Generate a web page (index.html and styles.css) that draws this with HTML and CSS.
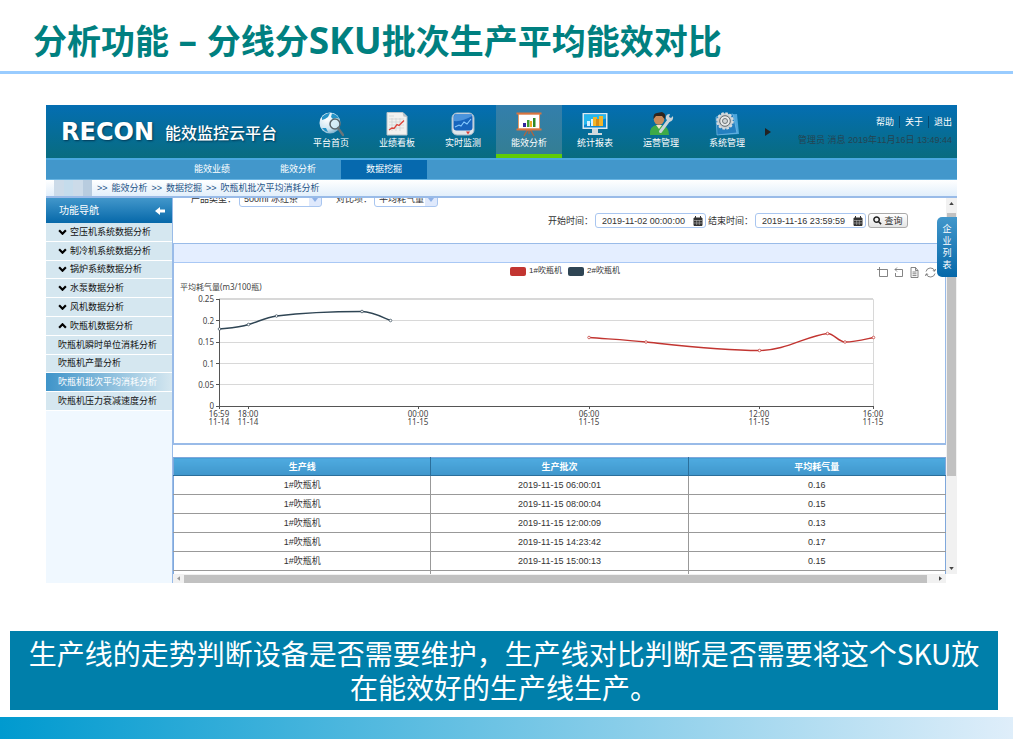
FILE: index.html
```html
<!DOCTYPE html>
<html lang="zh-CN">
<head>
<meta charset="utf-8">
<title>分析功能 – 分线分SKU批次生产平均能效对比</title>
<link rel="stylesheet" href="styles.css">
</head>
<body>
<header class="slide-title"><h1>分析功能<span> – </span>分线分<span>SKU</span>批次生产平均能效对比</h1></header>

<main class="app">
  <header class="topbar">
    <div class="brand"><span class="brand-mark">RECON</span><span class="brand-name">能效监控云平台</span></div>
    <nav class="modules">
      <a href="#" class="module">
        <svg viewBox="0 0 26 26"><defs><radialGradient id="gl" cx=".35" cy=".3" r=".8"><stop offset="0" stop-color="#fff"/><stop offset=".6" stop-color="#cfe6f2"/><stop offset="1" stop-color="#6aa5c4"/></radialGradient></defs><circle cx="12" cy="12" r="10.5" fill="url(#gl)"/><path d="M4 6q4-4 8-4l-2 4-3 2-3 1zM14 2.500q5 1 7 5l-3-.5-3 1-2-2zM4 17l4 0 2 4q-4-1-6-4z" fill="#2493c7"/><circle cx="17" cy="13" r="5" fill="#d6edf7" fill-opacity=".8" stroke="#59656b" stroke-width="1.5"/><path d="M20 17l5 7" stroke="#69757a" stroke-width="2.4" stroke-linecap="round"/></svg>
        <span>平台首页</span></a>
      <a href="#" class="module">
        <svg viewBox="0 0 26 26"><path d="M3 1.500h16l4 4V24H3z" fill="#f1f1ef" stroke="#b9c4ca"/><path d="M18.500 1.500l1 4 4 .5z" fill="#b7c0c5"/><path d="M5 5h5M5 8h15M5 11h15M5 14h15M5 17h15M8 7v13M12 7v13M16 7v13" stroke="#cbd0d2" stroke-width=".7"/><path d="M5 19l3-2 2 .5 3-4 2 1 5-5" fill="none" stroke="#dc4037" stroke-width="1.300"/></svg>
        <span>业绩看板</span></a>
      <a href="#" class="module">
        <svg viewBox="0 0 26 26"><rect x="2" y="2" width="22" height="22" rx="5" fill="#dfe5ea" stroke="#a3b9c9"/><rect x="3.500" y="3" width="19" height="16.500" rx="3" fill="#1765bd"/><path d="M4 10q8 1 18-5v-1q0-1-2-1H6Q4 3 4 6z" fill="#4b94dc"/><path d="M5 16l4-2 2 1 3-4 3 2 4-5" fill="none" stroke="#87cbff" stroke-width="1.100"/><path d="M16 20.500h4l-2 3z" fill="#dc3c36"/></svg>
        <span>实时监测</span></a>
      <a href="#" class="module active">
        <svg viewBox="0 0 26 26"><path d="M12 18l-4 7M14 18l4 7M13 18v5" stroke="#b5633a" stroke-width="1.300"/><path d="M2.500 3h21v15h-21z" fill="#fff" stroke="#e29a68"/><path d="M.5 2.500h25M.5 18.500h25" stroke="#d87540" stroke-width="2.200"/><path d="M7 12h3v4H7z" fill="#30269b"/><path d="M11 9h2.500v7H11z" fill="#3f9c32"/><path d="M14 10h2v6h-2z" fill="#eeae23"/><path d="M17 7h2.500v9H17z" fill="#2d8828"/></svg>
        <span>能效分析</span></a>
      <a href="#" class="module">
        <svg viewBox="0 0 26 26"><path d="M.5 2h25v16H.5z" fill="#dbeaf0"/><path d="M2 3.500h22v13H2z" fill="#0c87d2"/><path d="M2 3.500h22v4L2 14z" fill="#26b7ed"/><path d="M5 10h3v5H5zM9 8h3v7H9z" fill="#d8f2ff"/><path d="M11 6h4v9h-4zM17 5h4v10h-4z" fill="#f3b52a"/><path d="M14 8h3v7h-3z" fill="#d78c15"/><path d="M10 18h6v4h4v2H6v-2h4z" fill="#cfd9dd"/></svg>
        <span>统计报表</span></a>
      <a href="#" class="module">
        <svg viewBox="0 0 26 26"><path d="M2 24q-1-9 7-10h4q8 1 8 10z" fill="#3eaa48"/><path d="M8 14h6l-3 4z" fill="#f3e3cd"/><circle cx="11" cy="8.500" r="5.200" fill="#c78a5b"/><path d="M5.500 8Q5 2 9 2l5-1q5 2 2.500 7L14 5H8z" fill="#2f251e"/><path d="M12.500 20.500L21 9" stroke="#c9d3d8" stroke-width="3" stroke-linecap="round"/><path d="M18 8q-1-5 4-5l-1 3 2 1 2-2q1 5-4 6z" fill="#c9d3d8"/></svg>
        <span>运营管理</span></a>
      <a href="#" class="module">
        <svg viewBox="0 0 26 26"><path d="M5 4l18-1 2 20-20 1z" fill="#4da6dc"/><path d="M2 6l17-3 4 19-20 2z" fill="#247fc0" stroke="#75bde7" stroke-width=".7"/><circle cx="11" cy="10" r="7.800" fill="#c9d0d3" stroke="#d7dcde" stroke-width="2" stroke-dasharray="2.500 1.600"/><circle cx="11" cy="10" r="5.300" fill="#e7e9e9" stroke="#5f676b"/><circle cx="11" cy="10" r="2.500" fill="#d0d5d6" stroke="#6f777a"/></svg>
        <span>系统管理</span></a>
    </nav>
    <button class="more" aria-label="更多"><svg viewBox="0 0 6 8"><path d="M0 0l6 4-6 4z"/></svg></button>
    <div class="account">
      <div class="account-links"><a href="#">帮助</a><a href="#">关于</a><a href="#">退出</a></div>
      <div class="account-info">管理员 消息 2019年11月16日 13:49:44</div>
    </div>
  </header>

  <nav class="subnav"><a href="#">能效业绩</a><a href="#">能效分析</a><a href="#" class="active">数据挖掘</a></nav>
  <div class="crumbs"><span class="masked"><i></i><i></i><i></i><i></i></span><span>&gt;&gt;</span><a href="#">能效分析</a><span>&gt;&gt;</span><a href="#">数据挖掘</a><span>&gt;&gt;</span><a href="#">吹瓶机批次平均消耗分析</a></div>

  <div class="workspace">
    <aside class="sidebar">
      <div class="side-head"><span>功能导航</span><button aria-label="收起"><svg viewBox="0 0 10 8"><path d="M5 0v2.500h5v3H5V8L0 4z"/></svg></button></div>
      <nav class="side-list">
        <a href="#"><svg viewBox="0 0 8 5"><path d="M1 1l3 3 3-3"/></svg>空压机系统数据分析</a>
        <a href="#"><svg viewBox="0 0 8 5"><path d="M1 1l3 3 3-3"/></svg>制冷机系统数据分析</a>
        <a href="#"><svg viewBox="0 0 8 5"><path d="M1 1l3 3 3-3"/></svg>锅炉系统数据分析</a>
        <a href="#"><svg viewBox="0 0 8 5"><path d="M1 1l3 3 3-3"/></svg>水泵数据分析</a>
        <a href="#"><svg viewBox="0 0 8 5"><path d="M1 1l3 3 3-3"/></svg>风机数据分析</a>
        <a href="#"><svg viewBox="0 0 8 5"><path d="M1 4l3-3 3 3"/></svg>吹瓶机数据分析</a>
        <a href="#">吹瓶机瞬时单位消耗分析</a>
        <a href="#">吹瓶机产量分析</a>
        <a href="#" class="active">吹瓶机批次平均消耗分析</a>
        <a href="#">吹瓶机压力衰减速度分析</a>
      </nav>
    </aside>

    <div class="viewport">
      <section class="content">
        <div class="filters-top">
          <label for="product">产品类型：</label><span class="select product"><select id="product"><option>500ml 冰红茶</option></select></span>
          <label for="metric">对比项：</label><span class="select metric"><select id="metric"><option>平均耗气量</option></select></span>
        </div>
        <form class="filters">
          <label for="start">开始时间：</label>
          <span class="date"><input id="start" type="text" value="2019-11-02 00:00:00"><svg viewBox="0 0 10 10"><path d="M1 2h8v7.500H1zM2.500 0v2M7.500 0v2" /><path class="lines" d="M1 4.500h8M1 7h8M3.700 4v5M6.300 4v5"/></svg></span>
          <label for="end">结束时间：</label>
          <span class="date"><input id="end" type="text" value="2019-11-16 23:59:59"><svg viewBox="0 0 10 10"><path d="M1 2h8v7.500H1zM2.500 0v2M7.500 0v2" /><path class="lines" d="M1 4.500h8M1 7h8M3.700 4v5M6.300 4v5"/></svg></span>
          <button type="button" class="search"><svg viewBox="0 0 10 10"><circle cx="4" cy="4" r="3"/><path d="M6.300 6.300L9 9"/></svg>查询</button>
        </form>

        <section class="panel">
          <div class="panel-head"></div>
          <div class="chart-head">
            <div class="legend"><button><i class="red"></i>1#吹瓶机</button><button><i class="navy"></i>2#吹瓶机</button></div>
            <div class="tools">
              <button aria-label="区域缩放"><svg viewBox="0 0 11 11"><path d="M2.500 0v9.500h8v-7H0"/></svg></button>
              <button aria-label="还原缩放"><svg viewBox="0 0 11 11"><path d="M4 .5l-2 2 2 2M2 2.500h7.500v7h-7V6"/></svg></button>
              <button aria-label="数据视图"><svg viewBox="0 0 11 11"><path d="M2 .5h4.500l2.500 3v7H2zM6.500 .5v3H9M3.500 5h4M3.500 6.800h4M3.500 8.600h4"/></svg></button>
              <button aria-label="刷新"><svg viewBox="0 0 11 11"><path d="M1 4.500a4.600 4.600 0 0 1 8.800-.5M10 6.500a4.600 4.600 0 0 1-8.800.5M10.500 2l-.7 2.200-2-.6M.5 9l.7-2.200 2 .6"/></svg></button>
            </div>
          </div>
          <svg class="chart" viewBox="174 279 771 164" role="img" aria-label="平均耗气量">
            <text x="180" y="290">平均耗气量(m3/100瓶)</text>
            <path class="grid" d="M219 299.500H873.500V406M219 320.500H873M219 342.500H873M219 363.500H873M219 384.500H873"/>
            <path class="grid" d="M219 298.500H873"/>
            <path class="axis" d="M219.500 299V409M216 299.500h4M216 320.500h4M216 342.500h4M216 363.500h4M216 384.500h4M216 406.500H874M248.500 406v3M418.500 406v3M589.500 406v3M759.500 406v3M873.500 406v3"/>
            <g class="ylab"><text x="214" y="302">0.25</text><text x="214" y="324">0.2</text><text x="214" y="345">0.15</text><text x="214" y="367">0.1</text><text x="214" y="388">0.05</text><text x="214" y="409">0</text></g>
            <g class="xlab"><text><tspan x="219" y="417">16:59</tspan><tspan x="219" y="425">11-14</tspan></text><text><tspan x="248" y="417">18:00</tspan><tspan x="248" y="425">11-14</tspan></text><text><tspan x="418" y="417">00:00</tspan><tspan x="418" y="425">11-15</tspan></text><text><tspan x="589" y="417">06:00</tspan><tspan x="589" y="425">11-15</tspan></text><text><tspan x="759" y="417">12:00</tspan><tspan x="759" y="425">11-15</tspan></text><text><tspan x="873" y="417">16:00</tspan><tspan x="873" y="425">11-15</tspan></text></g>
            <g class="s-navy"><path d="M219.500 329C229 328 239 327.500 248.500 324.500C258 322 265 317.500 276.500 316C305 312.500 335 311.500 362 311.500C372 311.500 382 317 390.500 320.500"/><circle cx="219.500" cy="329" r="1.300"/><circle cx="248.500" cy="324.500" r="1.300"/><circle cx="276.500" cy="316" r="1.300"/><circle cx="362" cy="311.500" r="1.300"/><circle cx="390.500" cy="320.500" r="1.300"/></g>
            <g class="s-red"><path d="M589 337.500C608 339 627 340 646 342C684 346 722 350.500 759.500 350.500C786 350.500 806 336 827.500 333.500C834 333.500 838 341.500 845 342C855 342 864 339.500 873.500 337.500"/><circle cx="589" cy="337.500" r="1.300"/><circle cx="646" cy="342" r="1.300"/><circle cx="759.500" cy="350.500" r="1.300"/><circle cx="827.500" cy="333.500" r="1.300"/><circle cx="845" cy="342" r="1.300"/><circle cx="873.500" cy="337.500" r="1.300"/></g>
          </svg>
        </section>

        <table class="grid-table">
          <thead><tr><th>生产线</th><th>生产批次</th><th>平均耗气量</th></tr></thead>
          <tbody>
            <tr><td>1#吹瓶机</td><td>2019-11-15 06:00:01</td><td>0.16</td></tr>
            <tr><td>1#吹瓶机</td><td>2019-11-15 08:00:04</td><td>0.15</td></tr>
            <tr><td>1#吹瓶机</td><td>2019-11-15 12:00:09</td><td>0.13</td></tr>
            <tr><td>1#吹瓶机</td><td>2019-11-15 14:23:42</td><td>0.17</td></tr>
            <tr><td>1#吹瓶机</td><td>2019-11-15 15:00:13</td><td>0.15</td></tr>
            <tr><td></td><td></td><td></td></tr>
          </tbody>
        </table>
      </section>
      <div class="vbar"><svg viewBox="0 0 6 4"><path d="M0 4l3-4 3 4z"/></svg><div class="vthumb"></div><svg viewBox="0 0 6 4"><path d="M0 0l3 4 3-4z"/></svg></div>
      <div class="hbar"><svg class="dim" viewBox="0 0 4 6"><path d="M4 0L0 3l4 3z"/></svg><div class="hthumb"></div><svg viewBox="0 0 4 6"><path d="M0 0l4 3-4 3z"/></svg></div>
      <button class="company-tab">企业列表</button>
    </div>
  </div>
</main>

<p class="caption">生产线的走势判断设备是否需要维护，生产线对比判断是否需要将这个SKU放在能效好的生产线生产。</p>
<footer class="slide-foot"></footer>
</body>
</html>
```

FILE: styles.css
```css
* { box-sizing: border-box; }
body { margin: 0; background: #fff; color: #333; font: 9px/12px "Liberation Sans", "Noto Sans CJK SC", sans-serif; }
a { color: inherit; text-decoration: none; }
button, input, select { font: inherit; color: inherit; margin: 0; padding: 0; border: 0; background: none; }
svg { display: block; }

.slide-title { height: 74px; padding: 15px 33px 0; border-bottom: 3px solid #99ccff; }
.slide-title h1 { margin: 0; font: bold 34px/50px "Noto Sans CJK SC", sans-serif; color: #008080; white-space: nowrap; }
.slide-title span { font-family: "Open Sans", sans-serif; font-size: 37px; }

.app { margin: 31px 56px 0 46px; }

.topbar { display: flex; height: 53px; background: linear-gradient(#046eb2, #086c80); color: #fff; }
.brand { display: flex; align-items: center; width: 252px; padding-left: 15px; text-shadow: 1px 1px 2px #033a57; white-space: nowrap; }
.brand-mark { width: 104px; font: bold 24px/30px "DejaVu Sans", sans-serif; }
.brand-name { font: 500 16px/24px "Noto Sans CJK SC", sans-serif; }
.modules { display: flex; }
.module { display: flex; flex-direction: column; align-items: center; width: 66px; padding-top: 6px; border-bottom: 4px solid transparent; }
.module svg { width: 26px; height: 26px; }
.module.active { background: linear-gradient(#337fac, #347e94); border-color: #5fcb08; }
.more { width: 16px; padding: 0 5px; }
.more svg { width: 6px; height: 8px; fill: #222; }
.account { margin-left: auto; padding: 11px 5px 0 0; text-align: right; white-space: nowrap; }
.account-links { display: flex; justify-content: flex-end; }
.account-links a + a { margin-left: 5px; padding-left: 5px; border-left: 1px solid #06496f; }
.account-info { margin-top: 6px; color: #244452; }

.subnav { display: flex; height: 22px; padding-left: 123px; background: #4297cb; border-top: 2px solid #4aa8e0; border-bottom: 1px solid #68b5e3; color: #fff; line-height: 19px; }
.subnav a { width: 86px; text-align: center; }
.subnav .active { background: #0669ae; }

.crumbs { display: flex; align-items: center; gap: 4px; height: 18px; padding-left: 8px; border-bottom: 2px solid #99bbe8; background: linear-gradient(#fff, #e2effb); color: #1f5486; }
.masked { display: flex; width: 38px; height: 16px; margin-right: 1px; }
.masked i { flex: 1; background: #ccdbe9; }
.masked i:nth-child(even) { background: #c5dcec; }
.masked i:last-child { background: #b8ccdf; }

.workspace { display: flex; }
.sidebar { width: 126px; background: #f0f8ff; }
.side-head { display: flex; justify-content: space-between; align-items: center; height: 25px; padding: 0 7px 0 13px; background: linear-gradient(#4297cb, #0668a9); color: #fff; font-size: 10px; }
.side-head svg { width: 10px; height: 8px; fill: #fff; }
.side-list { display: grid; grid-auto-rows: 1fr; height: 188px; }
.side-list a { display: flex; align-items: center; gap: 3px; padding-left: 12px; border-bottom: 1px solid #fff; background: #d5e7f0; color: #111; white-space: nowrap; }
.side-list svg { width: 9px; height: 6px; fill: none; stroke: #000; stroke-width: 2; }
.side-list .active { background: linear-gradient(90deg, #3f94c9, #d5e7f0); color: #fff; }

.viewport { position: relative; flex: 1; display: grid; grid-template: 376px 9px / 1fr 11px; min-width: 0; border-left: 1px solid #99bbe8; }
.content { overflow: hidden; background: #fff; }
.filters-top { display: flex; align-items: flex-end; height: 9px; padding-left: 18px; overflow: hidden; }
.filters-top label { height: 14px; }
.select { display: flex; height: 16px; border: 1px solid #a9c6f0; border-radius: 3px; background: linear-gradient(270deg, #dfe9fc 12px, #fff 12px); position: relative; }
.select::after { content: ""; position: absolute; right: 3px; top: 6px; border: 3px solid transparent; border-top: 4px solid #8db0e6; }
.select select { width: 100%; padding-left: 4px; appearance: none; line-height: 12px; }
.product { width: 83px; margin: 0 14px 0 3px; }
.metric { width: 64px; margin-left: 2px; }
.filters { display: flex; justify-content: flex-end; align-items: center; gap: 2px; padding: 6px 38px 15px 0; }
.date { display: flex; align-items: center; width: 111px; height: 15px; padding: 0 2px 0 6px; border: 1px solid #a9c6f0; border-radius: 3px; }
.date input { flex: 1; width: 0; height: 13px; }
.date svg { width: 10px; height: 10px; fill: #333; stroke: #333; }
.date .lines { stroke: #bbb; stroke-width: .6; }
.search { display: flex; align-items: center; justify-content: center; gap: 2px; width: 40px; height: 15px; border: 1px solid #aaa; border-radius: 3px; background: linear-gradient(#fff, #e4e4e4); }
.search svg { width: 9px; height: 9px; fill: none; stroke: #222; stroke-width: 1.7px; }

.panel { border: 1px solid #99bbe8; border-bottom-width: 2px; }
.panel-head { height: 19px; background: #e4eeff; border-bottom: 1px solid #a9c8f5; }
.chart-head { display: grid; grid-template-columns: 1fr auto 1fr; align-items: center; height: 16px; padding: 0 9px 0 20px; }
.legend { grid-column: 2; display: flex; gap: 6px; font-size: 8px; }
.legend button { display: flex; align-items: center; gap: 3px; }
.legend i { width: 16px; height: 9px; border-radius: 2px; }
.red { background: #c23531; }
.navy { background: #2f4554; }
.tools { display: flex; justify-content: flex-end; gap: 5px; padding-top: 3px; }
.tools svg { width: 11px; height: 11px; fill: none; stroke: #777; stroke-width: .9; }
.chart { width: 100%; font: 8px "Noto Sans", "Noto Sans CJK SC", sans-serif; fill: #444; }
.grid { fill: none; stroke: #d8d8d8; }
.axis { fill: none; stroke: #555; }
.ylab { text-anchor: end; }
.xlab { text-anchor: middle; }
.s-navy path { fill: none; stroke: #2f4554; stroke-width: 1.4; }
.s-navy circle { fill: #fff; stroke: #2f4554; stroke-width: .7; }
.s-red path { fill: none; stroke: #c23531; stroke-width: 1.4; }
.s-red circle { fill: #fff; stroke: #c23531; stroke-width: .7; }

.grid-table { width: 100%; margin-top: 12px; border-collapse: collapse; table-layout: fixed; text-align: center; border: 1px solid #7fa8dc; }
.grid-table tr { height: 19px; }
.grid-table thead tr { height: 18px; }
.grid-table th { padding: 0; background: linear-gradient(#4fabe0, #3f96cb); border-right: 1px solid #2b6f9b; border-bottom: 1px solid #2b6f9b; color: #fff; }
.grid-table td { padding: 0; border-right: 1px solid #999; border-bottom: 1px solid #999; }
.grid-table tr > :last-child { border-right-color: #7fa8dc; }

.vbar { display: flex; flex-direction: column; align-items: center; padding: 4px 0; background: #f1f1f1; }
.vbar svg { width: 5px; height: 3px; fill: #444; }
.vthumb { width: 9px; height: 263px; margin: 8px 0 auto; background: #c1c1c1; }
.hbar { display: flex; align-items: center; gap: 4px; padding: 0 4px; background: #f1f1f1; }
.hbar svg { width: 3px; height: 5px; fill: #444; }
.hbar .dim { fill: #999; }
.hthumb { flex: 1; height: 8px; margin-right: 8px; background: #c1c1c1; }
.company-tab { position: absolute; top: 19px; right: 0; width: 20px; height: 60px; padding: 0 5px; border-radius: 5px 0 0 5px; background: linear-gradient(#4297cb, #0668a9); color: #fff; line-height: 12px; word-break: break-all; }

.caption { margin: 48px 15px 0 10px; padding: 5px 14px 6px; background: #007faa; color: #fff; font: 28px/34px "Noto Sans CJK SC", sans-serif; text-align: center; }
.slide-foot { height: 22px; margin-top: 7px; background: linear-gradient(90deg, #009acf, #dfeefa); }
```
